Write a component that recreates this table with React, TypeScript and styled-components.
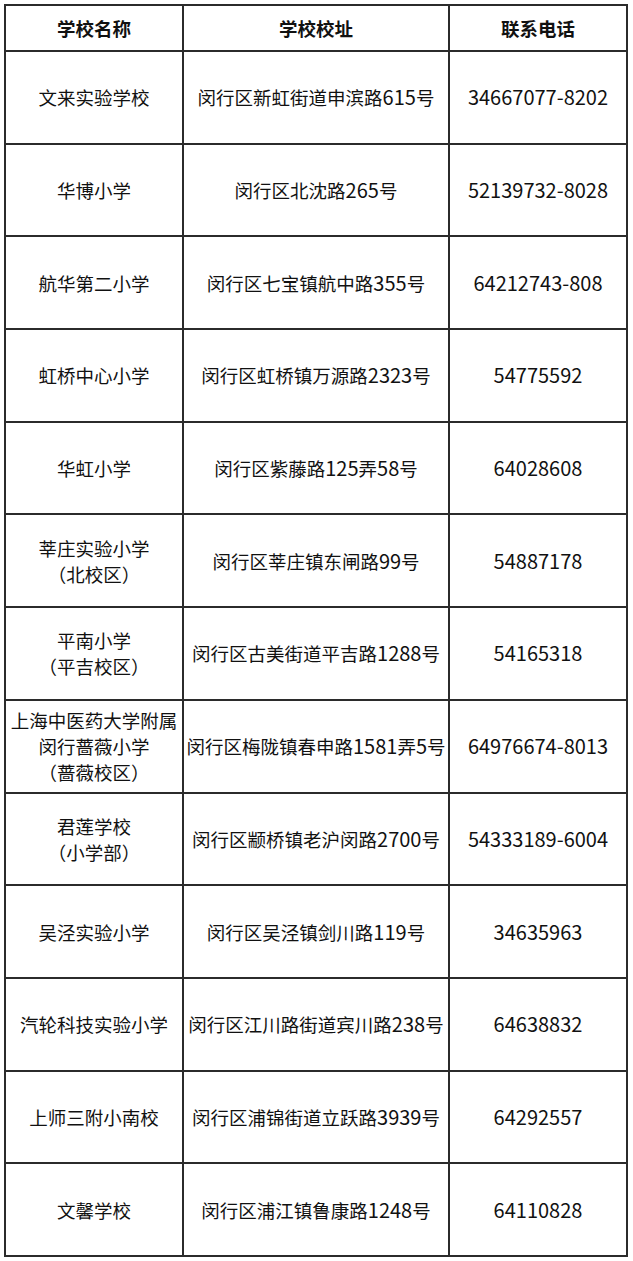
import React from "react";
import styled, { createGlobalStyle } from "styled-components";

const GlobalStyle = createGlobalStyle`
  html, body {
    margin: 0;
    padding: 0;
    background: #ffffff;
  }
  body {
    font-family: "Noto Sans CJK SC", "Noto Sans", sans-serif;
    color: #111;
  }
`;

const Page = styled.div`
  padding: 4px 5px 4px 4px;
  width: 633px;
  box-sizing: border-box;
`;

const Table = styled.table`
  width: 623px;
  border-collapse: collapse;
  table-layout: fixed;
  border: 2px solid #3a3a3a;
`;

const HeadCell = styled.th`
  height: 44px;
  padding: 0;
  border: 2px solid #2b2b2b;
  font-size: 18.5px;
  font-weight: 700;
  text-align: center;
  vertical-align: middle;
`;

const Row = styled.tr`
  height: 92.7px;
`;

const Cell = styled.td`
  padding: 0;
  border: 2px solid #2b2b2b;
  font-size: 18.5px;
  line-height: 26px;
  text-align: center;
  vertical-align: middle;
  white-space: nowrap;
`;

// digits in the original are drawn a touch larger than the Chinese text
const Num = styled.span`
  font-size: 20px;
`;

function Mixed({ text }: { text: string }) {
  const parts = text.split(/([0-9\-]+)/);
  return (
    <>
      {parts.map((part, i) =>
        /^[0-9\-]+$/.test(part) ? <Num key={i}>{part}</Num> : part
      )}
    </>
  );
}

interface School {
  name: string[];
  address: string;
  phone: string;
}

const schools: School[] = [
  { name: ["文来实验学校"], address: "闵行区新虹街道申滨路615号", phone: "34667077-8202" },
  { name: ["华博小学"], address: "闵行区北沈路265号", phone: "52139732-8028" },
  { name: ["航华第二小学"], address: "闵行区七宝镇航中路355号", phone: "64212743-808" },
  { name: ["虹桥中心小学"], address: "闵行区虹桥镇万源路2323号", phone: "54775592" },
  { name: ["华虹小学"], address: "闵行区紫藤路125弄58号", phone: "64028608" },
  { name: ["莘庄实验小学", "（北校区）"], address: "闵行区莘庄镇东闸路99号", phone: "54887178" },
  { name: ["平南小学", "（平吉校区）"], address: "闵行区古美街道平吉路1288号", phone: "54165318" },
  {
    name: ["上海中医药大学附属", "闵行蔷薇小学", "（蔷薇校区）"],
    address: "闵行区梅陇镇春申路1581弄5号",
    phone: "64976674-8013",
  },
  { name: ["君莲学校", "（小学部）"], address: "闵行区颛桥镇老沪闵路2700号", phone: "54333189-6004" },
  { name: ["吴泾实验小学"], address: "闵行区吴泾镇剑川路119号", phone: "34635963" },
  { name: ["汽轮科技实验小学"], address: "闵行区江川路街道宾川路238号", phone: "64638832" },
  { name: ["上师三附小南校"], address: "闵行区浦锦街道立跃路3939号", phone: "64292557" },
  { name: ["文馨学校"], address: "闵行区浦江镇鲁康路1248号", phone: "64110828" },
];

export default function App() {
  return (
    <Page>
      <GlobalStyle />
      <Table>
        <colgroup>
          <col style={{ width: 178 }} />
          <col style={{ width: 266 }} />
          <col style={{ width: 178 }} />
        </colgroup>
        <thead>
          <tr>
            <HeadCell>学校名称</HeadCell>
            <HeadCell>学校校址</HeadCell>
            <HeadCell>联系电话</HeadCell>
          </tr>
        </thead>
        <tbody>
          {schools.map((school) => (
            <Row key={school.address}>
              <Cell>
                {school.name.map((line, i) => (
                  <div key={i}>{line}</div>
                ))}
              </Cell>
              <Cell>
                <Mixed text={school.address} />
              </Cell>
              <Cell>
                <Mixed text={school.phone} />
              </Cell>
            </Row>
          ))}
        </tbody>
      </Table>
    </Page>
  );
}
